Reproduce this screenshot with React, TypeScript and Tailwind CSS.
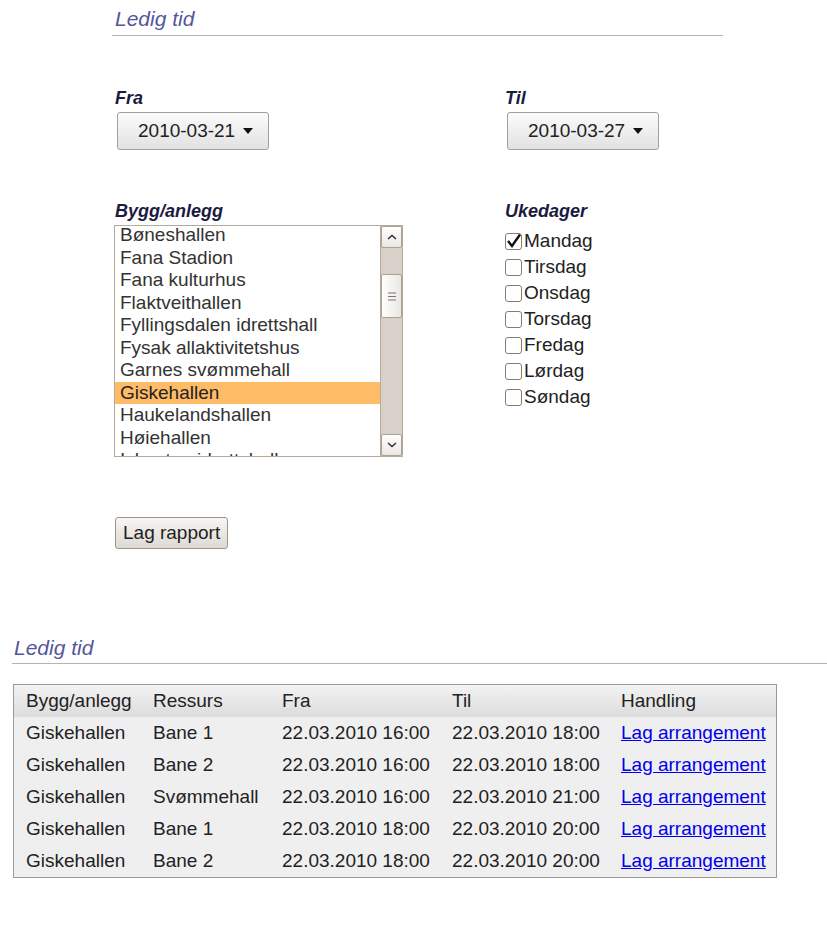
import React from "react";

const facilities = [
    "Bøneshallen",
    "Fana Stadion",
    "Fana kulturhus",
    "Flaktveithallen",
    "Fyllingsdalen idrettshall",
    "Fysak allaktivitetshus",
    "Garnes svømmehall",
    "Giskehallen",
    "Haukelandshallen",
    "Høiehallen",
    "Iskanten idrettshall",
];

const weekdays = [
    { name: "Mandag", checked: true },
    { name: "Tirsdag", checked: false },
    { name: "Onsdag", checked: false },
    { name: "Torsdag", checked: false },
    { name: "Fredag", checked: false },
    { name: "Lørdag", checked: false },
    { name: "Søndag", checked: false },
];

const rows = [
    ["Giskehallen", "Bane 1", "22.03.2010 16:00", "22.03.2010 18:00"],
    ["Giskehallen", "Bane 2", "22.03.2010 16:00", "22.03.2010 18:00"],
    ["Giskehallen", "Svømmehall", "22.03.2010 16:00", "22.03.2010 21:00"],
    ["Giskehallen", "Bane 1", "22.03.2010 18:00", "22.03.2010 20:00"],
    ["Giskehallen", "Bane 2", "22.03.2010 18:00", "22.03.2010 20:00"],
];

function DateSelect({ value }: { value: string }) {
    return (
        <div className="mt-[3px] ml-[2px] flex h-[38px] w-[152px] items-center justify-between rounded-[3px] border border-[#a0a0a0] bg-gradient-to-b from-[#fbfbfb] to-[#e2e2e2] pl-[20px] pr-[15px] text-[19px] text-[#222]">
            <span>{value}</span>
            <svg width="10" height="6" viewBox="0 0 10 6">
                <path d="M0 0 L10 0 L5 6 Z" fill="#111" />
            </svg>
        </div>
    );
}

function Label({ children }: { children: React.ReactNode }) {
    return <div className="text-[18px] leading-[21px] font-bold italic text-[#1b1b40]">{children}</div>;
}

function Heading({ children }: { children: React.ReactNode }) {
    return <h2 className="text-[21px] leading-[24px] italic text-[#55559a]">{children}</h2>;
}

export default function App() {
    return (
        <div className="min-h-[932px] w-[827px] bg-white font-['Liberation_Sans',Arial,sans-serif] text-[#222]">
            {/* search form */}
            <div className="pl-[112px] pt-[7px]">
                <div className="w-[611px] border-b border-[#b4b4b4] pb-[4px] pl-[3px]">
                    <Heading>Ledig tid</Heading>
                </div>

                <div className="mt-[52px] grid grid-cols-[390px_1fr] pl-[3px]">
                    <div>
                        <Label>Fra</Label>
                        <DateSelect value="2010-03-21" />
                    </div>
                    <div>
                        <Label>Til</Label>
                        <DateSelect value="2010-03-27" />
                    </div>
                </div>

                <div className="mt-[51px] grid grid-cols-[390px_1fr] pl-[3px]">
                    <div>
                        <Label>Bygg/anlegg</Label>
                        <div className="-ml-[1px] mt-[3px] flex h-[232px] w-[289px] overflow-hidden border border-[#b3aa9c] bg-white">
                            {/* list is scrolled a little */}
                            <div className="flex-1 overflow-hidden">
                                <div className="-mt-[2px]">
                                    {facilities.map((f) => (
                                        <div
                                            key={f}
                                            className={
                                                "h-[22.5px] pl-[5px] text-[19px] leading-[22.5px] whitespace-nowrap " +
                                                (f === "Giskehallen" ? "bg-[#ffbb66] text-[#222]" : "text-[#333]")
                                            }
                                        >
                                            {f}
                                        </div>
                                    ))}
                                </div>
                            </div>
                            {/* scrollbar */}
                            <div className="flex w-[22px] flex-col border-l border-[#b3aa9c] bg-[#d9d1c9]">
                                <div className="flex h-[22px] items-center justify-center rounded-[2px] border border-[#aaa196] bg-gradient-to-b from-white to-[#ebe7e2]">
                                    <svg width="10" height="6" viewBox="0 0 10 6">
                                        <path d="M1 5 L5 1.5 L9 5" stroke="#333" strokeWidth="1.6" fill="none" />
                                    </svg>
                                </div>
                                <div className="h-[26px]" />
                                <div className="flex h-[44px] items-center justify-center rounded-[2px] border border-[#aaa196] bg-gradient-to-r from-white to-[#ebe7e2]">
                                    <svg width="8" height="9" viewBox="0 0 8 9">
                                        <path d="M0 1 H8 M0 4.5 H8 M0 8 H8" stroke="#777" strokeWidth="1" />
                                    </svg>
                                </div>
                                <div className="flex-1" />
                                <div className="flex h-[22px] items-center justify-center rounded-[2px] border border-[#aaa196] bg-gradient-to-b from-white to-[#ebe7e2]">
                                    <svg width="10" height="6" viewBox="0 0 10 6">
                                        <path d="M1 1 L5 4.5 L9 1" stroke="#333" strokeWidth="1.6" fill="none" />
                                    </svg>
                                </div>
                            </div>
                        </div>
                    </div>
                    <div>
                        <Label>Ukedager</Label>
                        <div className="mt-[6px] flex flex-col">
                            {weekdays.map((d) => (
                                <label key={d.name} className="flex h-[26px] items-center text-[19px] text-[#222]">
                                    <span className="mr-[2px] flex h-[17px] w-[17px] items-center justify-center rounded-[3px] border border-[#857d72] bg-white">
                                        {d.checked && (
                                            <svg width="15" height="14" viewBox="0 0 15 14">
                                                <path d="M2 7 L6 12 L14 0.5" stroke="#111" strokeWidth="2.4" fill="none" />
                                            </svg>
                                        )}
                                    </span>
                                    {d.name}
                                </label>
                            ))}
                        </div>
                    </div>
                </div>

                <button className="mt-[60px] ml-[3px] h-[32px] rounded-[3px] border border-[#9d958a] bg-gradient-to-b from-[#f7f5f2] to-[#dedad4] px-[7px] text-[19px] text-[#222]">
                    Lag rapport
                </button>
            </div>

            {/* results */}
            <div className="mt-[87px] pl-[12px]">
                <div className="border-b border-[#b4b4b4] pb-[3px] pl-[2px]">
                    <Heading>Ledig tid</Heading>
                </div>

                <div className="mt-[20px] ml-[1px] w-[764px] border border-[#9a9a9a] bg-[#efefef] text-[19px] text-[#222]">
                    <div className="grid h-[32px] grid-cols-[127px_129px_170px_169px_1fr] items-center bg-gradient-to-b from-[#f3f3f3] to-[#dcdcdc]">
                        {["Bygg/anlegg", "Ressurs", "Fra", "Til", "Handling"].map((h) => (
                            <div key={h} className="pl-[12px] whitespace-nowrap">
                                {h}
                            </div>
                        ))}
                    </div>
                    {rows.map((r, i) => (
                        <div key={i} className="grid h-[32px] grid-cols-[127px_129px_170px_169px_1fr] items-center">
                            {r.map((c, j) => (
                                <div key={j} className="pl-[12px] whitespace-nowrap">
                                    {c}
                                </div>
                            ))}
                            <div className="pl-[12px] whitespace-nowrap">
                                <a href="#" className="text-[#0000ee] underline">
                                    Lag arrangement
                                </a>
                            </div>
                        </div>
                    ))}
                </div>
            </div>
        </div>
    );
}
